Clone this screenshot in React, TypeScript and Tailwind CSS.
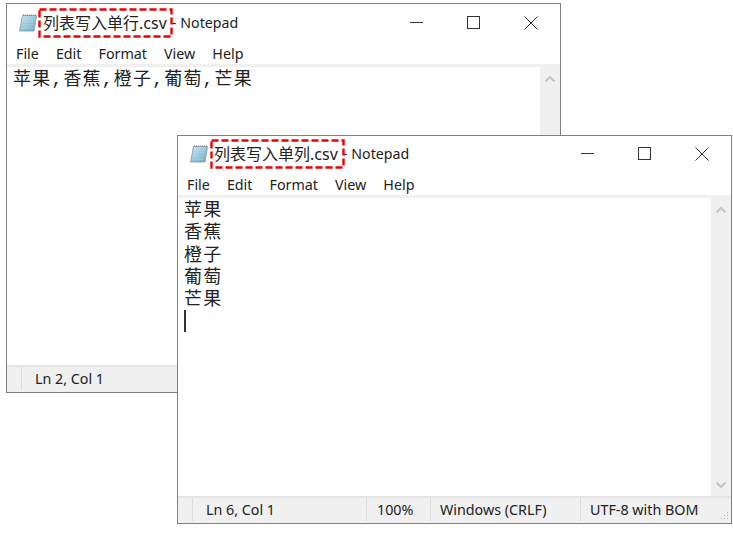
const ui = { fontFamily: '"Noto Sans", "Noto Sans CJK SC", sans-serif' };

function NotepadIcon() {
  return (
    <svg width="20" height="20" viewBox="0 0 20 20" className="shrink-0">
      <defs>
        <linearGradient id="pad" x1="0" y1="0" x2="1" y2="1">
          <stop offset="0" stopColor="#d6e9f3" />
          <stop offset="0.6" stopColor="#8fc0d8" />
          <stop offset="1" stopColor="#6ea3bf" />
        </linearGradient>
      </defs>
      <path d="M4.5 2.5H18.5L16 18H1.5Z" fill="url(#pad)" stroke="#7c98a8" strokeWidth="0.8" />
      <path d="M5 2.2H18.5" stroke="#8a8f94" strokeWidth="1.6" strokeDasharray="1 1" />
      <path d="M5.5 6H16M5 9H15.5M4.5 12H15M4 15H14.5" stroke="#b9d8e8" strokeWidth="0.7" />
    </svg>
  );
}

function Chevron({ up }: { up: boolean }) {
  return (
    <svg width="12" height="8" viewBox="0 0 12 8">
      <path d={up ? "M1.5 6.5L6 2L10.5 6.5" : "M1.5 1.5L6 6L10.5 1.5"} fill="none" stroke="#c4c4c4" strokeWidth="2" />
    </svg>
  );
}

function Controls() {
  return (
    <div className="flex items-center text-[#333]">
      <svg width="13" height="13" viewBox="0 0 13 13" className="mr-[44px]">
        <path d="M0 6.5H13" stroke="#333" strokeWidth="1" />
      </svg>
      <svg width="13" height="13" viewBox="0 0 13 13" className="mr-[44px]">
        <rect x="0.5" y="0.5" width="12" height="12" fill="none" stroke="#333" strokeWidth="1" />
      </svg>
      <svg width="14" height="14" viewBox="0 0 14 14">
        <path d="M0.5 0.5L13.5 13.5M13.5 0.5L0.5 13.5" stroke="#333" strokeWidth="1" />
      </svg>
    </div>
  );
}

function Menu({ className }: { className: string }) {
  return (
    <div className={"flex shrink-0 items-center gap-[17px] pl-[9px] text-[14.3px] text-[#222] " + className}>
      <span>File</span>
      <span>Edit</span>
      <span>Format</span>
      <span>View</span>
      <span>Help</span>
    </div>
  );
}

function Notepad({
  name,
  className,
  titleClass,
  menuClass,
  lines,
  position,
  extras,
  caret,
}: {
  name: string;
  className: string;
  titleClass: string;
  menuClass: string;
  lines: string[];
  position: string;
  extras?: boolean;
  caret?: boolean;
}) {
  return (
    <div className={"absolute flex flex-col border border-[#808080] bg-white " + className} style={ui}>
      <div className={"flex shrink-0 items-center pl-[11px] pr-[22px] text-[#222] " + titleClass}>
        <NotepadIcon />
        <span className="ml-[5px] whitespace-nowrap text-[16px]">{name}</span>
        <span className="ml-[5px] text-[14px]">-</span>
        <span className="ml-[4px] flex-1 whitespace-nowrap text-[14.2px]">Notepad</span>
        <Controls />
      </div>
      <Menu className={menuClass} />
      <div className="flex min-h-0 flex-1 border-t-[3px] border-[#f0f0f0]">
        <div
          className="flex-1 whitespace-pre pl-[6px] pt-[2px] text-[18px] leading-[22.25px] tracking-[1.2px] text-[#222]"
          style={{ fontFamily: '"Liberation Mono", "Noto Sans CJK SC", monospace' }}
        >
          {lines.map((l) => (
            <div key={l}>{l}</div>
          ))}
          {caret && <div className="-mt-[1px] h-[22px] w-[2px] bg-[#333]" />}
        </div>
        <div className="flex w-[20px] shrink-0 flex-col items-center justify-between bg-[#f0f0f0] pb-[7px] pt-[8px]">
          <Chevron up />
          <Chevron up={false} />
        </div>
      </div>
      <div className="flex h-[27px] shrink-0 items-center border-t-2 border-[#e4e4e4] bg-[#f0f0f0] pb-[2px] text-[14.3px] text-[#222]">
        <div className="flex h-full w-[174px] items-center">
          <div className="ml-[14px] h-full w-px bg-[#dcdcdc]" />
          <span className="ml-[13px]">{position}</span>
        </div>
        {extras && (
          <>
            <div className="ml-[14px] h-full w-px bg-[#dcdcdc]" />
            <span className="ml-[10px] w-[53px]">100%</span>
            <div className="h-full w-px bg-[#dcdcdc]" />
            <span className="ml-[9px] w-[140px]">Windows (CRLF)</span>
            <div className="h-full w-px bg-[#dcdcdc]" />
            <span className="ml-[9px]">UTF-8 with BOM</span>
          </>
        )}
      </div>
    </div>
  );
}

function DashedBox({ className }: { className: string }) {
  return (
    <svg width="135" height="30" viewBox="0 0 135 30" className={"absolute " + className}>
      <rect x="1.5" y="1.5" width="132" height="27" fill="none" stroke="#f00000" strokeWidth="2.4" strokeDasharray="7 3" />
    </svg>
  );
}

export default function App() {
  return (
    <div className="relative h-[533px] w-[733px] overflow-hidden bg-white">
      <Notepad
        name="列表写入单行.csv"
        className="left-[6px] top-[3px] h-[390px] w-[555px]"
        titleClass="h-[37px]"
        menuClass="h-[23px] pt-[3px]"
        lines={["苹果,香蕉,橙子,葡萄,芒果"]}
        position="Ln 2, Col 1"
      />
      <Notepad
        name="列表写入单列.csv"
        className="left-[177px] top-[135px] h-[389px] w-[555px]"
        titleClass="h-[35px]"
        menuClass="h-[24px] pt-[4px]"
        lines={["苹果", "香蕉", "橙子", "葡萄", "芒果"]}
        position="Ln 6, Col 1"
        extras
        caret
      />
      <DashedBox className="left-[38px] top-[8px]" />
      <DashedBox className="left-[210px] top-[139px]" />
      <svg width="9" height="9" viewBox="0 0 9 9" className="absolute left-[720px] top-[511px]">
        <path d="M7 1h1v1H7zM4 4h1v1H4zM7 4h1v1H7zM1 7h1v1H1zM4 7h1v1H4zM7 7h1v1H7z" fill="#b5b5b5" />
      </svg>
    </div>
  );
}
